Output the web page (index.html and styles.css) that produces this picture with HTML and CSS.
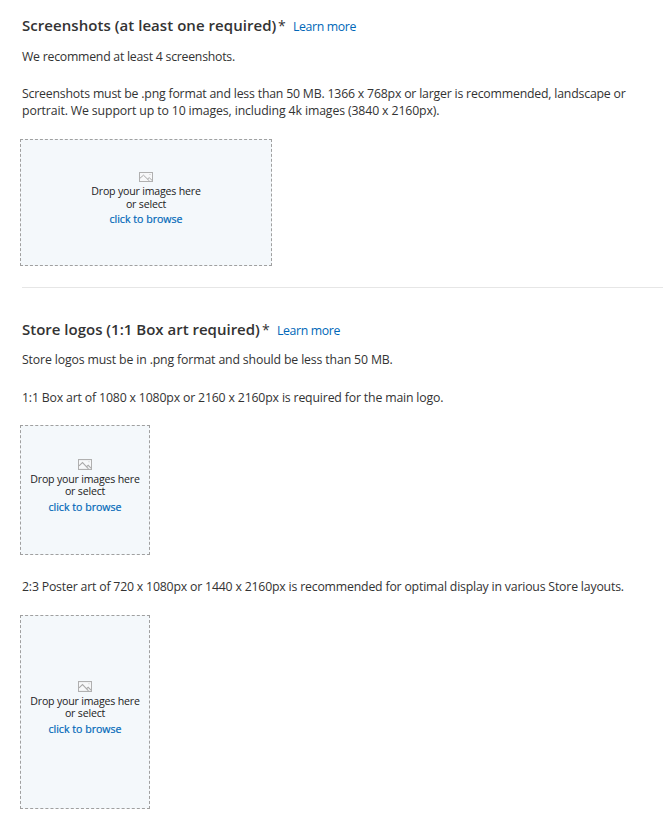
FILE: index.html
```html
<!DOCTYPE html>
<html lang="en">
<head>
<meta charset="utf-8">
<title>Store listing images</title>
<link rel="stylesheet" href="styles.css">
</head>
<body>
<svg class="defs" width="0" height="0" aria-hidden="true">
  <symbol id="picture" viewBox="0 0 14 10" preserveAspectRatio="none">
    <rect x=".5" y=".5" width="13" height="9" fill="#f7f8f9" stroke="#b0b0b0"/>
    <path d="M1 6.2 4.5 3.2 10.5 9M8.5 7l1.7-1.3L13 8.3" fill="none" stroke="#a9a9a9"/>
    <path d="M10.5 2.5h1" stroke="#c4c4c4"/>
  </symbol>
</svg>
<main>
  <section class="screenshots">
    <header><h2 class="h-shots">Screenshots (at least one required)</h2><span class="star">*</span><a href="#">Learn more</a></header>
    <p class="recommend">We recommend at least 4 screenshots.</p>
    <p class="format"><span class="f1">Screenshots must be .png format and less than 50 MB. 1366 x 768px or larger is recommended, landscape or</span><br><span class="f2">portrait. We support up to 10 images, including 4k images (3840 x 2160px).</span></p>
    <div class="drop wide"><svg class="icon" width="14" height="10"><use href="#picture"/></svg><span class="hint">Drop your images here</span><span class="or">or select</span><a href="#">click to browse</a></div>
  </section>
  <section class="logos">
    <header><h2 class="h-logos">Store logos (1:1 Box art required)</h2><span class="star">*</span><a href="#">Learn more</a></header>
    <p class="logo-format">Store logos must be in .png format and should be less than 50 MB.</p>
    <p class="box-art">1:1 Box art of 1080 x 1080px or 2160 x 2160px is required for the main logo.</p>
    <div class="drop square"><svg class="icon" width="14" height="11"><use href="#picture"/></svg><span class="hint">Drop your images here</span><span class="or">or select</span><a href="#">click to browse</a></div>
    <p class="poster-art">2:3 Poster art of 720 x 1080px or 1440 x 2160px is recommended for optimal display in various Store layouts.</p>
    <div class="drop poster"><svg class="icon" width="14" height="11"><use href="#picture"/></svg><span class="hint">Drop your images here</span><span class="or">or select</span><a href="#">click to browse</a></div>
  </section>
</main>
</body>
</html>
```

FILE: styles.css
```css
* { box-sizing: border-box; }
body { margin: 0; background: #fff; color: #333; font: 12.3px/17px "Open Sans", "Noto Sans", sans-serif; overflow: hidden; }
.defs { position: absolute; }
main { padding: 15px 0 0 22px; }
h2, p { margin: 0; white-space: nowrap; }
a { color: #0067b8; text-decoration: none; }
header { display: flex; height: 20px; line-height: 20px; align-items: baseline; }
h2 { font-size: 15px; font-weight: 600; line-height: 20px; }
.h-shots { width: 256px; letter-spacing: .05px; }
.h-logos { width: 240px; letter-spacing: 0; }
.star { width: 15px; font-size: 14px; }
header a { letter-spacing: -.37px; }
p { letter-spacing: -.25px; }
.recommend { margin-top: 13px; }
.format { margin-top: 20px; }
.f1 { letter-spacing: -.197px; }
.f2 { letter-spacing: -.13px; }
.drop { display: flex; flex-direction: column; align-items: center; margin-left: -2px; background: #f4f8fb; border: 1px dashed #a0a0a0; font-size: 10.6px; line-height: 13px; letter-spacing: -.19px; color: #222; white-space: nowrap; }
.drop a { letter-spacing: 0; margin-top: 2px; -webkit-text-stroke: .2px #0067b8; }
.icon { display: block; margin-bottom: 3px; }
.wide { width: 252px; height: 127px; margin-top: 20px; padding-top: 32px; }
.screenshots { height: 273px; border-bottom: 1px solid #e6e6e6; }
.logos { padding-top: 31px; }
.logo-format { margin-top: 12px; letter-spacing: -.15px; }
.box-art { margin-top: 21px; letter-spacing: -.17px; }
.square { width: 130px; height: 130px; margin-top: 19px; padding-top: 33px; }
.square, .poster { line-height: 12px; }
.square a, .poster a { margin-top: 4px; }
.poster-art { margin-top: 23px; letter-spacing: -.193px; }
.poster { width: 130px; height: 194px; margin-top: 20px; padding-top: 65px; }
```
